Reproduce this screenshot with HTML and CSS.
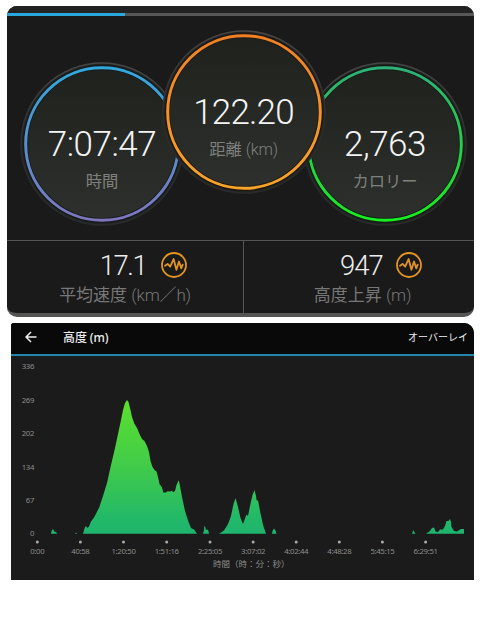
FILE: index.html
```html
<!DOCTYPE html>
<html lang="ja">
<head>
    <meta charset="UTF-8">
    <meta name="viewport" content="width=device-width, initial-scale=1.0">
    <title>アクティビティ</title>
    <link rel="stylesheet" href="styles.css">
</head>
<body>
    <section class="summary">
        <div class="progress"><div class="progress-bar"></div></div>
        <div class="gauges">
            <div class="gauge time">
                <svg class="ring" viewBox="0 0 166 166">
                    <defs>
                        <linearGradient id="face" x1="0" y1="0" x2="0" y2="1"><stop offset="0" stop-color="#1f211d"/><stop offset="1" stop-color="#2d302c"/></linearGradient>
                        <linearGradient id="rim" x1="0" y1="0" x2="0" y2="1"><stop offset="0" stop-color="#454543"/><stop offset="0.5" stop-color="#2b2d2c"/><stop offset="1" stop-color="#292b2b"/></linearGradient>
                        <linearGradient id="blue" x1="0" y1="0" x2="0" y2="1"><stop offset="0" stop-color="#32a9dc"/><stop offset="1" stop-color="#8075bd"/></linearGradient>
                    </defs>
                    <circle cx="83" cy="83" r="81" fill="#202221" stroke="url(#rim)" stroke-width="1.6"/>
                    <circle cx="83" cy="83" r="76.5" fill="url(#face)" stroke="#141b1d" stroke-width="5"/>
                    <circle cx="83" cy="83" r="76.3" fill="none" stroke="url(#blue)" stroke-width="3"/>
                </svg>
                <div class="reading">
                    <div class="number">7:07:47</div>
                    <div class="caption">時間</div>
                </div>
            </div>
            <div class="gauge distance">
                <svg class="ring" viewBox="0 0 166 166">
                    <defs>
                        <linearGradient id="orange" x1="0" y1="0" x2="0" y2="1"><stop offset="0" stop-color="#ee8127"/><stop offset="1" stop-color="#f6a42a"/></linearGradient>
                    </defs>
                    <circle cx="83" cy="83" r="81" fill="#202221" stroke="url(#rim)" stroke-width="1.6"/>
                    <circle cx="83" cy="83" r="76.5" fill="url(#face)" stroke="#20180f" stroke-width="5"/>
                    <circle cx="83" cy="83" r="76.3" fill="none" stroke="url(#orange)" stroke-width="3"/>
                </svg>
                <div class="reading">
                    <div class="number">122.20</div>
                    <div class="caption">距離 <span class="unit">(km)</span></div>
                </div>
            </div>
            <div class="gauge calories">
                <svg class="ring" viewBox="0 0 166 166">
                    <defs>
                        <linearGradient id="green" x1="0" y1="0" x2="0" y2="1"><stop offset="0" stop-color="#2fb078"/><stop offset="0.7" stop-color="#1fdb37"/><stop offset="1" stop-color="#18ee20"/></linearGradient>
                    </defs>
                    <circle cx="83" cy="83" r="81" fill="#202221" stroke="url(#rim)" stroke-width="1.6"/>
                    <circle cx="83" cy="83" r="76.5" fill="url(#face)" stroke="#121c14" stroke-width="5"/>
                    <circle cx="83" cy="83" r="76.3" fill="none" stroke="url(#green)" stroke-width="3"/>
                </svg>
                <div class="reading">
                    <div class="number">2,763</div>
                    <div class="caption">カロリー</div>
                </div>
            </div>
        </div>
        <div class="stats">
            <div class="stat speed">
                <div class="stat-value">
                    <span>17.1</span>
                    <svg class="pulse" viewBox="0 0 26 26"><circle cx="13" cy="13" r="12"/><path d="M4 13.7L6.6 11.9L9.2 14.6L12.6 7L15.4 17.8L18 9.5L20.2 16.3L21.7 12.6"/></svg>
                </div>
                <div class="stat-label">平均速度 <span class="unit">(km／h)</span></div>
            </div>
            <div class="stat ascent">
                <div class="stat-value">
                    <span>947</span>
                    <svg class="pulse" viewBox="0 0 26 26"><circle cx="13" cy="13" r="12"/><path d="M4 13.7L6.6 11.9L9.2 14.6L12.6 7L15.4 17.8L18 9.5L20.2 16.3L21.7 12.6"/></svg>
                </div>
                <div class="stat-label">高度上昇 <span class="unit">(m)</span></div>
            </div>
        </div>
    </section>

    <section class="elevation">
        <header class="bar">
            <svg class="back" viewBox="0 0 12 12"><path d="M11.5 6H1.2M6 1L1 6L6 11"/></svg>
            <h1>高度 (m)</h1>
            <span class="overlay">オーバーレイ</span>
        </header>
        <svg class="chart" viewBox="11 356 463 224">
            <defs>
                <linearGradient id="hill" gradientUnits="userSpaceOnUse" x1="0" y1="400" x2="0" y2="533"><stop offset="0" stop-color="#5be02d"/><stop offset="0.5" stop-color="#41cb4a"/><stop offset="0.9" stop-color="#22b869"/><stop offset="1" stop-color="#1fb46d"/></linearGradient>
            </defs>
            <g fill="url(#hill)">
                <path d="M51 533.7L51.5 531L53 529L54.3 531.5L56 532L57 533.7Z"/>
                <path d="M75 533.7L76.3 532.5L77 533.7Z"/>
                <path d="M83 533.7L84.5 528.5L85.7 526L87.5 528L89 526.5L91 521.5L94 517.5L99 508L103 496L107 483L111 465L115 448L118 434L121 420L123 410L125 403L127 400L128.5 402L130.5 410L132 417L134.5 424L137 428L139.5 434L142 439L144.5 441L147 446L149 452L150.5 461L152.5 467L154.5 470L156.5 471.5L158 477L159.5 484L162 487.5L163.3 492.5L166 492.5L167.5 491.2L170 491.5L172 490.8L173 492.2L175 491L176.5 485L178 481.8L178.8 480.3L180 486L182 497L185 511L188.5 522L191 528L194 529.5L197 533.7Z"/>
                <path d="M203 533.7L204 530L204.3 526L205.3 527L206 530L208 529.5L209 533.7Z"/>
                <path d="M219 533.7L224 530.5L228 524L231 516L233.5 504L235.5 498L238 507L240.5 518L243 524L245 518.5L246.5 514.5L248 516L250 506L252.5 495L254.5 490L256 496L256.5 500L258.2 501L260 511L263 525L266 533.7Z"/>
                <path d="M272 533.7L272.5 531L274 528.5L275.5 530.5L276.5 533.7Z"/>
                <path d="M412 533.7L413.3 530.3L415.5 533.7Z"/>
                <path d="M426 533.7L430 531L432 528L434 527.5L435.5 531.5L438 532L440 529.5L443 529.5L445 526L446.5 521L448.5 521L450 519L451 522L451.5 527L454 531L457 531.5L461 529L464 529V533.7Z"/>
            </g>
            <g class="y-axis">
                <text x="34" y="369.2">336</text>
                <text x="34" y="402.6">269</text>
                <text x="34" y="436">202</text>
                <text x="34" y="469.6">134</text>
                <text x="34" y="503">67</text>
                <text x="34" y="536.4">0</text>
            </g>
            <g class="ticks">
                <circle cx="37.3" cy="542" r="1.5"/>
                <circle cx="80.4" cy="542" r="1.5"/>
                <circle cx="123.5" cy="542" r="1.5"/>
                <circle cx="166.7" cy="542" r="1.5"/>
                <circle cx="210" cy="542" r="1.5"/>
                <circle cx="253.1" cy="542" r="1.5"/>
                <circle cx="296.2" cy="542" r="1.5"/>
                <circle cx="339.3" cy="542" r="1.5"/>
                <circle cx="382.4" cy="542" r="1.5"/>
                <circle cx="425.6" cy="542" r="1.5"/>
            </g>
            <g class="x-axis">
                <text x="37.3" y="553.7">0:00</text>
                <text x="80.4" y="553.7">40:58</text>
                <text x="123.5" y="553.7">1:20:50</text>
                <text x="166.7" y="553.7">1:51:16</text>
                <text x="210" y="553.7">2:25:05</text>
                <text x="253.1" y="553.7">3:07:02</text>
                <text x="296.2" y="553.7">4:02:44</text>
                <text x="339.3" y="553.7">4:48:28</text>
                <text x="382.4" y="553.7">5:45:15</text>
                <text x="425.6" y="553.7">6:29:51</text>
            </g>
            <text class="axis-title" x="213" y="567.2">時間（時：分：秒）</text>
        </svg>
    </section>
</body>
</html>
```

FILE: styles.css
```css
body {
    margin: 0;
    padding: 6px 6px 0 7px;
    background: #fff;
    font-family: Roboto, "Noto Sans CJK JP", sans-serif;
    overflow: hidden;
}
svg {
    display: block;
}
.summary {
    box-sizing: border-box;
    height: 311px;
    border-radius: 10px;
    overflow: hidden;
    background: #1a1a1a;
    border-bottom: 4px solid #555554;
}
.progress {
    height: 3px;
    padding-top: 7px;
    background: linear-gradient(#222, #222) no-repeat, #575757;
    background-size: 100% 7px;
}
.progress-bar {
    width: 118px;
    height: 3px;
    background: #28a8dc;
}
.gauges {
    display: flex;
    height: 224px;
    padding-left: 12px;
}
.gauge {
    display: grid;
    flex: none;
    width: 166px;
    height: 166px;
    margin-top: 44.5px;
    text-align: center;
}
.gauge > * {
    grid-area: 1 / 1;
}
.gauge.distance {
    margin: 12.5px -24.5px 0;
    z-index: 1;
}
.ring {
    width: 166px;
    height: 166px;
}
.reading {
    padding-top: 62px;
    z-index: 1;
}
.number {
    font-size: 35px;
    font-weight: 300;
    line-height: 44px;
    letter-spacing: -0.5px;
    color: #f4f4f4;
}
.distance .number {
    letter-spacing: -0.8px;
}
.caption {
    margin-top: 3px;
    font-size: 16.3px;
    line-height: 24px;
    color: #7f807e;
}
.unit {
    font-weight: 300;
    letter-spacing: -0.2px;
}
.stats {
    display: grid;
    grid-template-columns: 237px 1fr;
    height: 73px;
    border-top: 1px solid #555;
}
.stat {
    text-align: center;
}
.speed {
    border-right: 1px solid #555;
}
.ascent {
    padding-left: 7px;
}
.stat-value {
    display: flex;
    justify-content: center;
    align-items: center;
    gap: 15px;
    height: 36px;
    padding: 6px 0 0 37px;
    font-size: 27.5px;
    font-weight: 300;
    letter-spacing: -1px;
    color: #eee;
}
.speed .stat-value {
    letter-spacing: -1.5px;
}
.ascent .stat-value {
    gap: 13px;
}
.pulse {
    width: 26px;
    height: 26px;
    fill: none;
    stroke: #e39422;
    stroke-width: 1.8;
    stroke-linejoin: round;
    stroke-linecap: round;
}
.stat-label {
    font-size: 17px;
    line-height: 24px;
    color: #777;
}
.elevation {
    margin: 6px 0 0 4px;
    height: 257px;
    border-radius: 3px 10px 0 0;
    overflow: hidden;
    background: #1b1b1b;
}
.bar {
    display: flex;
    align-items: center;
    box-sizing: border-box;
    height: 33px;
    padding: 0 6px 4px 14px;
    background: #090909;
    border-bottom: 2px solid #2385aa;
    color: #eee;
}
.back {
    width: 12px;
    height: 12px;
    fill: none;
    stroke: #eee;
    stroke-width: 1.5;
}
.bar h1 {
    margin: 0 0 0 26px;
    font-family: "Noto Sans", "Noto Sans CJK JP", sans-serif;
    font-size: 12px;
    font-weight: 500;
    letter-spacing: -0.1px;
}
.overlay {
    margin-left: auto;
    font-size: 10px;
}
.chart {
    width: 463px;
    height: 224px;
}
.y-axis, .x-axis, .axis-title {
    font-family: "Noto Sans", "Noto Sans CJK JP", sans-serif;
    font-size: 7.8px;
    letter-spacing: -0.35px;
    fill: #8c8c8c;
}
.y-axis {
    text-anchor: end;
}
.x-axis {
    text-anchor: middle;
}
.ticks {
    fill: #aaa;
}
.axis-title {
    font-size: 8.5px;
    letter-spacing: 0;
}
```
